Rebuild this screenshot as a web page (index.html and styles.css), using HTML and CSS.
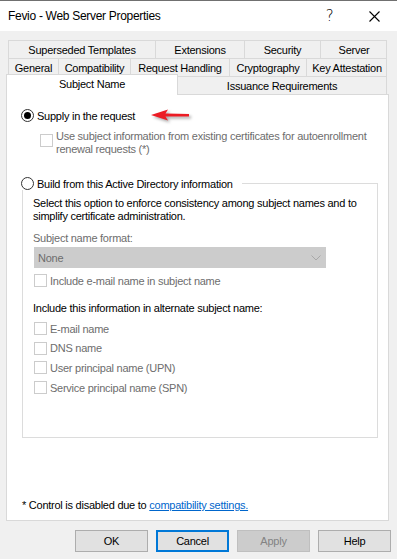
FILE: index.html
```html
<!DOCTYPE html>
<html>
<head>
<meta charset="utf-8">
<link rel="stylesheet" href="styles.css">
</head>
<body>
<div class="window">
  <div class="titlebar">
    <span class="title">Fevio - Web Server Properties</span>
    <span class="tb-btn help">?</span>
    <span class="tb-btn close"><svg width="11" height="11" viewBox="0 0 11 11"><path d="M0.5 0.5 L10.5 10.5 M10.5 0.5 L0.5 10.5" stroke="#000" stroke-width="1.1" fill="none"/></svg></span>
  </div>
  <div class="body">
    <div class="tabrow row1">
      <div class="tab">Superseded Templates</div>
      <div class="tab">Extensions</div>
      <div class="tab">Security</div>
      <div class="tab">Server</div>
    </div>
    <div class="tabrow row2">
      <div class="tab">General</div>
      <div class="tab">Compatibility</div>
      <div class="tab">Request Handling</div>
      <div class="tab">Cryptography</div>
      <div class="tab">Key Attestation</div>
    </div>
    <div class="row3">
      <div class="tab3 selected">Subject Name</div>
      <div class="tab3 other">Issuance Requirements</div>
    </div>
    <div class="panel">
      <div class="opt">
        <span class="radio checked"></span>
        <span>Supply in the request</span>
        <svg class="arrow" width="40" height="13" viewBox="0 0 40 13"><path d="M0 6 L17 0.5 L14.5 4.6 L38 5 L38 7.4 L14.5 7.6 L17 11.5 Z" fill="#ec1c24"/></svg>
      </div>
      <div class="subopt">
        <span class="check"></span>
        <span class="subtext disabled">Use subject information from existing certificates for autoenrollment renewal requests (*)</span>
      </div>
      <div class="group">
        <div class="group-head">
          <span class="radio"></span>
          <span>Build from this Active Directory information</span>
        </div>
        <div class="group-body">
          <p class="desc">Select this option to enforce consistency among subject names and to simplify certificate administration.</p>
          <div class="label disabled">Subject name format:</div>
          <div class="select"><span>None</span><svg width="10" height="6" viewBox="0 0 10 6"><path d="M0.5 0.5 L5 5 L9.5 0.5" stroke="#a8a8a8" fill="none"/></svg></div>
          <div class="cb first"><span class="check"></span><span class="disabled">Include e-mail name in subject name</span></div>
          <div class="label alt">Include this information in alternate subject name:</div>
          <div class="cblist">
            <div class="cb"><span class="check"></span><span class="disabled">E-mail name</span></div>
            <div class="cb"><span class="check"></span><span class="disabled">DNS name</span></div>
            <div class="cb"><span class="check"></span><span class="disabled">User principal name (UPN)</span></div>
            <div class="cb"><span class="check"></span><span class="disabled">Service principal name (SPN)</span></div>
          </div>
        </div>
      </div>
      <div class="footer">* Control is disabled due to <a class="link">compatibility settings.</a></div>
    </div>
    <div class="buttons">
      <div class="btn">OK</div>
      <div class="btn default">Cancel</div>
      <div class="btn off">Apply</div>
      <div class="btn">Help</div>
    </div>
  </div>
</div>
</body>
</html>
```
FILE: styles.css
```css
* { box-sizing: border-box; }
html, body { margin: 0; padding: 0; }
body {
  width: 397px;
  height: 559px;
  overflow: hidden;
  background: #f0f0f0;
  font-family: "Liberation Sans", Arial, sans-serif;
  font-size: 11px;
  letter-spacing: -0.25px;
  color: #000;
}
.window {
  border-top: 1px solid #707070;
  height: 559px;
  display: flex;
  flex-direction: column;
}
.titlebar {
  height: 30px;
  background: #fff;
  display: flex;
  align-items: center;
  padding-left: 8px;
}
.title {
  flex: 1;
  font-size: 12px;
  letter-spacing: -0.3px;
}
.tb-btn {
  width: 46px;
  height: 30px;
  display: flex;
  align-items: center;
  justify-content: center;
}
.help { font-size: 15px; font-family: "DejaVu Sans", sans-serif; font-weight: 300; padding-left: 3px; }
.body {
  padding: 9px 8px 0 6px;
  display: flex;
  flex-direction: column;
}
.tabrow {
  display: grid;
  margin-left: 2px;
  width: 379px;
  border-right: 1px solid #d9d9d9;
}
.row1 { grid-template-columns: 147px 89px 76px 67px; }
.row2 { grid-template-columns: 50px 72px 99px 77px 81px; }
.tab {
  height: 18px;
  border-top: 1px solid #d9d9d9;
  border-left: 1px solid #d9d9d9;
  display: flex;
  align-items: center;
  justify-content: center;
  white-space: nowrap;
}
.row3 {
  display: flex;
  align-items: flex-end;
  height: 20px;
  margin-top: -2px;
}
.tab3 {
  display: flex;
  align-items: center;
  justify-content: center;
  white-space: nowrap;
}
.tab3.selected {
  width: 172px;
  height: 21px;
  background: #fff;
  border: 1px solid #d9d9d9;
  border-bottom: none;
  margin-bottom: -1px;
  position: relative;
  z-index: 1;
  padding-bottom: 2px;
}
.tab3.other {
  width: 209px;
  height: 18px;
  border-top: 1px solid #d9d9d9;
  border-right: 1px solid #d9d9d9;
}
.panel {
  height: 427px;
  background: #fff;
  border: 1px solid #d9d9d9;
  padding: 14px 10px 8px 14px;
  display: flex;
  flex-direction: column;
}
.opt {
  display: flex;
  align-items: center;
  height: 13px;
  gap: 3px;
}
.radio {
  width: 13px;
  height: 13px;
  border: 1px solid #333;
  border-radius: 50%;
  display: inline-flex;
  align-items: center;
  justify-content: center;
  flex: none;
  background: #fff;
}
.radio.checked::after {
  content: "";
  width: 7px;
  height: 7px;
  border-radius: 50%;
  background: #000;
}
.arrow {
  margin-left: 13px;
  filter: drop-shadow(2px 2px 1.5px rgba(0,0,0,0.35));
}
.check {
  width: 13px;
  height: 13px;
  border: 1px solid #cccccc;
  background: #fff;
  flex: none;
}
.disabled { color: #6d6d6d; }
.subopt {
  display: flex;
  align-items: flex-start;
  gap: 3px;
  margin-top: 8px;
  margin-left: 19px;
}
.subopt .check { margin-top: 4px; }
.subtext { line-height: 13px; width: 325px; }
.group {
  margin-top: 27px;
  margin-left: 1px;
  height: 255px;
  border: 1px solid #dcdcdc;
  flex: none;
}
.group-head {
  display: flex;
  align-items: center;
  gap: 3px;
  height: 13px;
  margin-top: -7px;
  margin-left: -2px;
  width: fit-content;
  background: #fff;
  padding-right: 9px;
}
.group-body {
  padding: 7px 8px 0 10px;
}
.desc {
  margin: 0;
  line-height: 13px;
}
.label { line-height: 13px; }
.label.disabled { margin-top: 9px; }
.select {
  margin-top: 2px;
  margin-left: 1px;
  width: 292px;
  height: 21px;
  background: #cccccc;
  display: flex;
  align-items: center;
  justify-content: space-between;
  padding: 0 5px 0 4px;
  color: #6d6d6d;
}
.cb {
  display: flex;
  align-items: center;
  gap: 3px;
  height: 13px;
  margin-left: 1px;
}
.cb.first { margin-top: 6px; }
.label.alt { margin-top: 15px; }
.cblist {
  margin-top: 7px;
  display: flex;
  flex-direction: column;
  gap: 6.7px;
}
.footer {
  margin-top: auto;
  margin-left: 1px;
  line-height: 13px;
}
.link {
  color: #0066cc;
  text-decoration: underline;
}
.buttons {
  margin-top: 9px;
  margin-right: -2px;
  display: flex;
  justify-content: flex-end;
  gap: 8px;
}
.btn {
  width: 73px;
  height: 22px;
  background: #e1e1e1;
  border: 1px solid #adadad;
  display: flex;
  align-items: center;
  justify-content: center;
}
.btn.default { border: 2px solid #0078d7; }
.btn.off { background: #cccccc; border-color: #bfbfbf; color: #838383; }
```
